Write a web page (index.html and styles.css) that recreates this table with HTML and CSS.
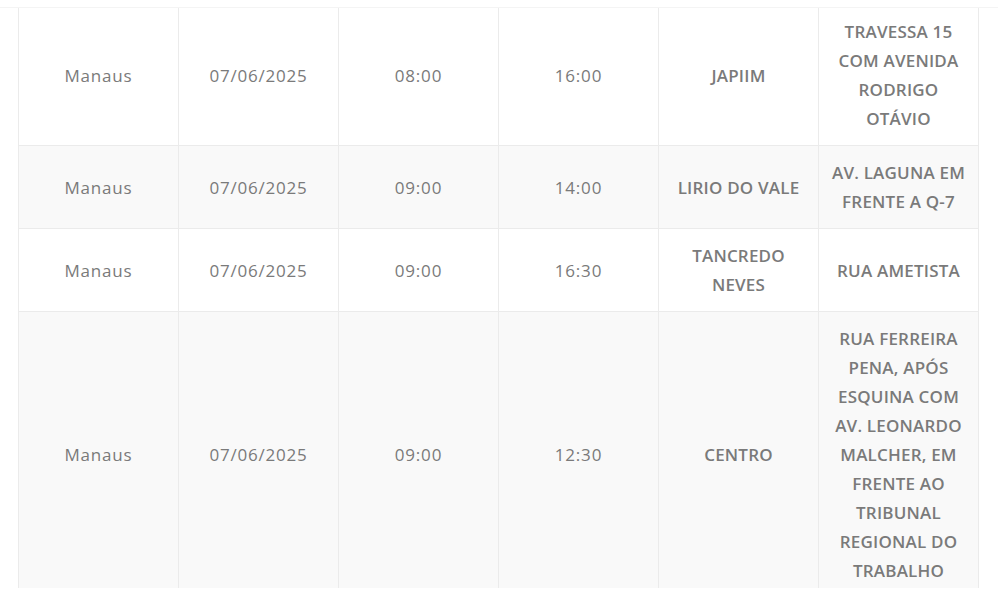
FILE: index.html
```html
<!DOCTYPE html>
<html lang="pt-BR">
<head>
<meta charset="utf-8">
<title>Agenda</title>
<link rel="stylesheet" href="styles.css">
</head>
<body>
<div class="frame">
  <table class="agenda">
    <colgroup>
      <col class="c"><col class="c"><col class="c"><col class="c"><col class="c"><col class="c">
    </colgroup>
    <tbody>
      <tr>
        <td>Manaus</td>
        <td>07/06/2025</td>
        <td>08:00</td>
        <td>16:00</td>
        <td class="up">JAPIIM</td>
        <td class="up">TRAVESSA 15 COM AVENIDA RODRIGO OTÁVIO</td>
      </tr>
      <tr class="alt">
        <td>Manaus</td>
        <td>07/06/2025</td>
        <td>09:00</td>
        <td>14:00</td>
        <td class="up">LIRIO DO VALE</td>
        <td class="up">AV. LAGUNA EM FRENTE A Q-7</td>
      </tr>
      <tr>
        <td>Manaus</td>
        <td>07/06/2025</td>
        <td>09:00</td>
        <td>16:30</td>
        <td class="up">TANCREDO NEVES</td>
        <td class="up">RUA AMETISTA</td>
      </tr>
      <tr class="alt">
        <td>Manaus</td>
        <td>07/06/2025</td>
        <td>09:00</td>
        <td>12:30</td>
        <td class="up">CENTRO</td>
        <td class="up">RUA FERREIRA PENA, APÓS ESQUINA COM AV. LEONARDO MALCHER, EM FRENTE AO TRIBUNAL REGIONAL DO TRABALHO</td>
      </tr>
    </tbody>
  </table>
</div>
</body>
</html>
```

FILE: styles.css
```css
html, body {
  margin: 0;
  padding: 0;
  background: #ffffff;
}

body {
  font-family: "Open Sans", "DejaVu Sans", sans-serif;
  color: #7a7a7a;
}

.frame {
  margin-top: 7px;
  height: 581px;
  overflow: hidden;
  border-top: 1px solid #f4f4f4;
  box-sizing: border-box;
  padding-left: 18px;
}

.agenda {
  border-collapse: collapse;
  table-layout: fixed;
  width: 961px;
  margin-top: -4px;
}

.agenda col.c {
  width: 160px;
}

.agenda td {
  box-sizing: border-box;
  border: 1px solid #ebebeb;
  padding: 12px 12px;
  text-align: center;
  vertical-align: middle;
  font-size: 17px;
  line-height: 29px;
  font-weight: 500;
  letter-spacing: 0.8px;
  color: #7a7a7a;
}

.agenda td.up {
  font-weight: 600;
  letter-spacing: 0.2px;
}

.agenda tr.alt td {
  background: #f9f9f9;
}
```
